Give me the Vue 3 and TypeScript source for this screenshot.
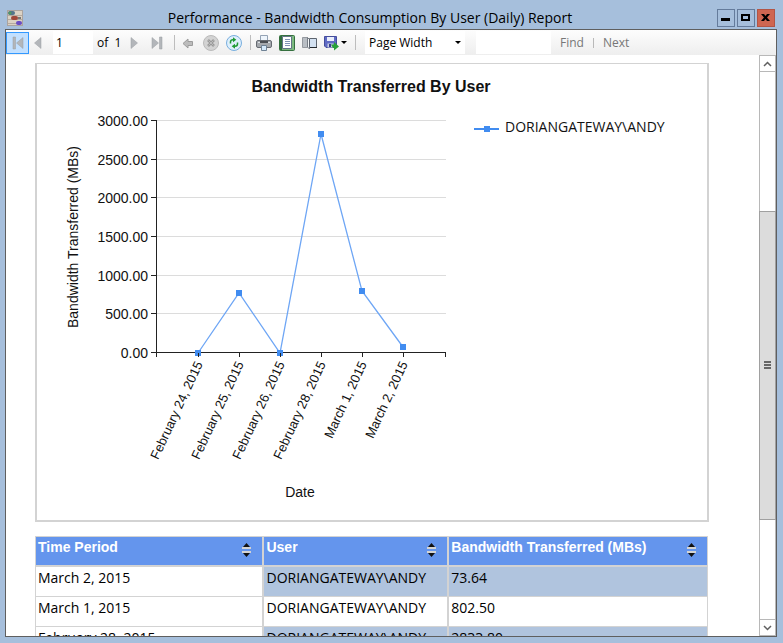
<script setup lang="ts">
import { computed, ref } from 'vue'

interface Sample {
  label: string
  value: number
}

interface Row {
  period: string
  user: string
  total: string
}

const samples: Sample[] = [
  { label: 'February 24, 2015', value: 6 },
  { label: 'February 25, 2015', value: 778 },
  { label: 'February 26, 2015', value: 2 },
  { label: 'February 28, 2015', value: 2833.8 },
  { label: 'March 1, 2015', value: 802.5 },
  { label: 'March 2, 2015', value: 73.64 },
]

const rows: Row[] = [
  { period: 'March 2, 2015', user: 'DORIANGATEWAY\\ANDY', total: '73.64' },
  { period: 'March 1, 2015', user: 'DORIANGATEWAY\\ANDY', total: '802.50' },
  { period: 'February 28, 2015', user: 'DORIANGATEWAY\\ANDY', total: '2833.80' },
]

const columns = ['Time Period', 'User', 'Bandwidth Transferred (MBs)']

const page = ref('1')
const zoom = ref('Page Width')
const search = ref('')

const plot = { left: 120, right: 409, top: 57, bottom: 289, max: 3000 }

const yOf = (v: number): number =>
  plot.bottom - Math.round((v / plot.max) * (plot.bottom - plot.top))
const xOf = (i: number): number => plot.left + 41 * (i + 1)

const yTicks = [3000, 2500, 2000, 1500, 1000, 500, 0]
const points = computed(() => samples.map((s, i) => ({ ...s, x: xOf(i), y: yOf(s.value) })))
const line = computed(() => points.value.map((p) => `${p.x},${p.y}`).join(' '))
</script>

<template>
  <div class="window">
    <header class="titlebar">
      <svg class="app-icon" width="16" height="16" viewBox="0 0 16 16" aria-hidden="true">
        <rect width="16" height="16" fill="#aaa39f" />
        <rect x="1" y="1" width="14" height="14" fill="#dcd2c4" />
        <path d="M1 5.500h14M1 9.500h14M1 13.500h14" stroke="#b5aaa0" />
        <rect x="1" y="1" width="7" height="4" rx="2" fill="#54758c" />
        <circle cx="3" cy="3" r="1.500" fill="#4f9a5c" />
        <rect x="4" y="6" width="7" height="4" rx="2" fill="#a1483a" />
        <path d="M11 8h3" stroke="#777" stroke-width="2" />
        <rect x="9" y="11" width="6" height="4" rx="2" fill="#6a4cc4" />
      </svg>
      <h1>Performance - Bandwidth Consumption By User (Daily) Report</h1>
      <div class="controls">
        <button type="button" aria-label="Minimize">
          <svg width="16" height="16" viewBox="0 0 16 16"><path d="M3 8h9v3H3z" /></svg>
        </button>
        <button type="button" aria-label="Maximize">
          <svg width="16" height="16" viewBox="0 0 16 16">
            <path fill-rule="evenodd" d="M3 4h9v7H3zM5 6v3h5V6z" />
          </svg>
        </button>
        <button type="button" class="close" aria-label="Close">
          <svg width="16" height="16" viewBox="0 0 16 16">
            <path d="M3 4h3l1.500 2L9 4h3L9 7.500 12 11H9L7.500 9 6 11H3l3-3.500z" />
          </svg>
        </button>
      </div>
    </header>

    <main class="frame">
      <div class="toolbar">
        <button type="button" class="tool active" aria-label="First page">
          <svg width="16" height="16" viewBox="0 0 16 16" class="nav">
            <path d="M3 2h2.500v12H3zM13 2.500v11L6.500 8z" />
          </svg>
        </button>
        <button type="button" class="tool narrow" aria-label="Previous page">
          <svg width="16" height="16" viewBox="0 0 16 16" class="nav"><path d="M11 2.500v11L4.500 8z" /></svg>
        </button>
        <input v-model="page" class="page" type="text" aria-label="Page" />
        <span class="of">of&nbsp; 1</span>
        <button type="button" class="tool narrow" aria-label="Next page">
          <svg width="16" height="16" viewBox="0 0 16 16" class="nav"><path d="M5 2.500v11L11.500 8z" /></svg>
        </button>
        <button type="button" class="tool last" aria-label="Last page">
          <svg width="16" height="16" viewBox="0 0 16 16" class="nav">
            <path d="M2 2.500v11L8.500 8zM9.500 2H12v12H9.500z" />
          </svg>
        </button>
        <span class="sep"></span>
        <button type="button" class="tool" aria-label="Back">
          <svg width="16" height="16" viewBox="0 0 16 16">
            <path d="M3 8.500L8 4v2.500h4.500v4H8V13z" fill="#bcbcbc" stroke="#9c9c9c" />
          </svg>
        </button>
        <button type="button" class="tool" aria-label="Stop">
          <svg width="16" height="16" viewBox="0 0 16 16">
            <circle cx="8" cy="8" r="7.500" fill="#d3d3d3" stroke="#bababa" />
            <path d="M5 5l6 6M11 5l-6 6" stroke="#999" stroke-width="2.600" />
            <path d="M5.500 5.500l5 5M10.500 5.500l-5 5" stroke="#c4c4c4" stroke-width=".8" />
          </svg>
        </button>
        <button type="button" class="tool" aria-label="Refresh">
          <svg width="16" height="16" viewBox="0 0 16 16">
            <circle cx="8" cy="8" r="7.500" fill="#deeffc" stroke="#78aede" />
            <path d="M4.500 8.500V7Q4.500 4.800 7 4.800M11.500 7.500V9Q11.500 11.200 9 11.200" fill="none" stroke="#1f9a35" stroke-width="1.500" />
            <path d="M7 2.300l3.300 2.500L7 7.300zM9 8.700l-3.300 2.500L9 13.700z" fill="#1f9a35" />
          </svg>
        </button>
        <span class="sep"></span>
        <button type="button" class="tool" aria-label="Print">
          <svg width="16" height="16" viewBox="0 0 16 16">
            <path d="M4.500.5h7v6h-7z" fill="#eef5fc" stroke="#94a3b5" />
            <rect x=".5" y="5.500" width="15" height="7" rx="1.500" fill="#a4a8ad" stroke="#666b72" />
            <path d="M2 7.500h12" stroke="#dfe3e8" />
            <path d="M4 6h8v2H4z" fill="#4a4e54" />
            <path d="M5.500 10.500h5v5h-5z" fill="#d4e9fb" stroke="#6f8295" />
          </svg>
        </button>
        <button type="button" class="tool" aria-label="Print layout">
          <svg width="16" height="16" viewBox="0 0 16 16">
            <rect x=".5" y=".5" width="15" height="15" rx="1" fill="#7dbb80" stroke="#35703f" />
            <path d="M1 1h2v14H1z" fill="#2f6d3c" />
            <path d="M3.500 1.500h9v12h-9z" fill="#fff" stroke="#637487" />
            <path d="M6 4.500h5M6 6.500h5M6 8.500h5M6 10.500h5" stroke="#7f93b5" />
          </svg>
        </button>
        <button type="button" class="tool" aria-label="Page setup">
          <svg width="16" height="16" viewBox="0 0 16 16">
            <path d="M.5 2.500h5v10h-5z" fill="#b9bec4" stroke="#95999f" />
            <path d="M5.500 2.500l2 2v9.500l-2-2z" fill="#f4f6f8" stroke="#777d85" />
            <path d="M7.500 3.500h7v9h-7z" fill="#d3e1f1" stroke="#5d646e" />
            <path d="M8 12.500h7" stroke="#24282d" />
          </svg>
        </button>
        <button type="button" class="tool export" aria-label="Export">
          <svg width="25" height="16" viewBox="0 0 25 16">
            <path d="M1.500 1.500h12v11H3l-1.500-1.500z" fill="#5f6ac4" stroke="#444d9c" />
            <path d="M4 2h7v4H4z" fill="#e9eefb" />
            <path d="M4.500 8.500h6v4h-6z" fill="#c9cfe0" />
            <path d="M6 9h2v3H6z" fill="#343c8c" />
            <path d="M8 9.500h3V7l5 4.500-5 4V13h-1z" fill="#27a03a" />
            <path d="M18 6h6l-3 3z" fill="#000" />
          </svg>
        </button>
        <span class="sep"></span>
        <div class="zoom">
          <select v-model="zoom" aria-label="Zoom">
            <option>Page Width</option>
            <option>Whole Page</option>
            <option>100%</option>
          </select>
          <svg width="6" height="3" viewBox="0 0 6 3" aria-hidden="true"><path d="M0 0h6L3 3z" /></svg>
        </div>
        <input v-model="search" class="search" type="text" aria-label="Search text" />
        <button type="button" class="link">Find</button>
        <span class="bar"></span>
        <button type="button" class="link">Next</button>
      </div>

      <div class="viewport">
        <section class="report">
          <figure class="chart">
            <svg viewBox="0 0 670 456" role="img" aria-label="Bandwidth Transferred By User">
              <text class="chart-title" x="334" y="28" text-anchor="middle">Bandwidth Transferred By User</text>
              <g v-for="t in yTicks" :key="t">
                <rect class="grid" :x="plot.left" :y="yOf(t) - 1" :width="plot.right - plot.left" height="1" />
                <rect class="axis" :x="plot.left - 6" :y="yOf(t) - 1" width="6" height="1" />
                <text x="111" :y="yOf(t) + 5" text-anchor="end">{{ t.toFixed(2) }}</text>
              </g>
              <text transform="translate(41 173) rotate(-90)" text-anchor="middle">
                Bandwidth Transferred (MBs)
              </text>
              <rect class="axis" :x="plot.left - 1" :y="plot.top - 1" width="1" height="237" />
              <rect class="axis" :x="plot.left" :y="plot.bottom - 1" :width="plot.right - plot.left" height="1" />
              <rect class="axis" :x="plot.right - 1" :y="plot.bottom" width="1" height="4" />
              <polyline class="series" :points="line" />
              <g v-for="p in points" :key="p.label">
                <rect class="marker" :x="p.x - 3" :y="p.y - 3" width="6" height="6" />
                <rect class="axis" :x="p.x" :y="plot.bottom" width="1" height="4" />
                <text
                  class="date"
                  :transform="`translate(${p.x + 5} 300) rotate(-65)`"
                  text-anchor="end"
                >{{ p.label }}</text>
              </g>
              <text x="263" y="433" text-anchor="middle">Date</text>
              <rect class="marker" x="437" y="64" width="25" height="2" />
              <rect class="marker" x="447" y="62" width="6" height="6" />
              <text class="legend" x="468" y="68">DORIANGATEWAY\ANDY</text>
            </svg>
          </figure>

          <table>
            <colgroup>
              <col class="col-period" />
              <col class="col-user" />
              <col />
            </colgroup>
            <thead>
              <tr>
                <th v-for="c in columns" :key="c" scope="col">
                  <div class="head">
                    <span>{{ c }}</span>
                    <button type="button" class="sort" :aria-label="`Sort by ${c}`">
                      <svg width="9" height="14" viewBox="0 0 9 14">
                        <path d="M0 5h9M0 9h9" stroke="#d3d3d3" stroke-width="2" />
                        <path d="M4.500 0L8 4H1zM1 10h7l-3.500 4z" fill="#111" />
                      </svg>
                    </button>
                  </div>
                </th>
              </tr>
            </thead>
            <tbody>
              <tr v-for="r in rows" :key="r.period">
                <td>{{ r.period }}</td>
                <td>{{ r.user }}</td>
                <td>{{ r.total }}</td>
              </tr>
            </tbody>
          </table>
        </section>

        <div class="scrollbar">
          <button type="button" aria-label="Scroll up">
            <svg width="9" height="6" viewBox="0 0 9 6"><path d="M1 5l3.500-3.500L8 5" /></svg>
          </button>
          <div class="track">
            <div class="before"></div>
            <div class="thumb"><i></i><i></i><i></i></div>
            <div class="after"></div>
          </div>
          <button type="button" aria-label="Scroll down">
            <svg width="9" height="6" viewBox="0 0 9 6"><path d="M1 1l3.500 3.500L8 1" /></svg>
          </button>
        </div>
      </div>
    </main>
  </div>
</template>

<style>
body {
  margin: 0;
  overflow: hidden;
}
</style>

<style scoped>
.window {
  display: flex;
  flex-direction: column;
  box-sizing: border-box;
  height: 100vh;
  padding: 0 6px 6px 5px;
  background: #a6bfdc;
  color: #000;
  font-family: "Open Sans", "Noto Sans", sans-serif;
  font-size: 12px;
}

button,
input,
select {
  box-sizing: border-box;
  margin: 0;
  padding: 0;
  border: 0;
  border-radius: 0;
  outline: 0;
  background: none;
  color: inherit;
  font: inherit;
}

svg {
  display: block;
}

.titlebar {
  display: flex;
  flex: none;
  align-items: center;
  box-sizing: border-box;
  height: 29px;
  padding: 6px 2px 0;
}

h1 {
  flex: 1;
  margin: 0;
  font-size: 14px;
  font-weight: 400;
  line-height: 20px;
  text-align: center;
  white-space: nowrap;
}

.controls {
  display: flex;
  gap: 2px;
}

.controls button {
  width: 18px;
  height: 18px;
  border: 1px solid #647b9b;
}

.controls .close {
  border-color: #b25546;
  background: #cf6651;
}

.frame {
  display: flex;
  flex: 1;
  flex-direction: column;
  min-height: 0;
  border: 1px solid #5f5f5f;
  background: #fff;
}

.toolbar {
  display: flex;
  flex: none;
  align-items: center;
  height: 25px;
  background: linear-gradient(#fdfdfd, #eee);
}

.tool {
  display: flex;
  flex: none;
  align-items: center;
  justify-content: center;
  width: 23px;
  height: 23px;
}

.tool.active {
  height: 22px;
  border: 1px solid #3399ff;
  background: #c2e0ff;
}

.tool.narrow {
  width: 18px;
}

.tool.last {
  margin-left: 3px;
}

.tool.export {
  width: 29px;
}

.nav path {
  fill: #b3b6ba;
  stroke: #9b9ea3;
  stroke-width: 0.5;
}

.page {
  width: 40px;
  height: 23px;
  margin-left: 6px;
  padding-left: 3px;
  background: #fff;
}

.of {
  width: 28px;
  margin-left: 4px;
  white-space: nowrap;
}

.sep {
  flex: none;
  width: 1px;
  height: 15px;
  margin: 0 1px 0 5px;
  background: #bdbdbd;
}

.zoom {
  position: relative;
  width: 100px;
  margin-left: 8px;
}

.zoom select {
  width: 100%;
  height: 23px;
  padding-left: 4px;
  appearance: none;
  background: #fff;
}

.zoom svg {
  position: absolute;
  top: 10px;
  right: 4px;
  pointer-events: none;
}

.search {
  width: 75px;
  height: 23px;
  margin-left: 11px;
  background: #fff;
}

.link {
  margin-left: 9px;
  color: #777;
}

.bar {
  width: 1px;
  height: 10px;
  margin-left: 9px;
  background: #b9b9b9;
}

.viewport {
  display: flex;
  flex: 1;
  min-height: 0;
}

.report {
  flex: 1;
  min-width: 0;
  padding: 8px 50px 0 29px;
  overflow: hidden;
}

.chart {
  margin: 0 0 14px;
  border: 2px solid #d3d3d3;
  border-top-width: 1px;
}

.chart svg {
  width: 100%;
  height: auto;
}

.chart text {
  fill: #111;
  font-family: "Liberation Sans", Arial, sans-serif;
  font-size: 14px;
}

.chart .date {
  font-size: 13px;
}

.chart .chart-title {
  font-size: 16px;
  font-weight: 700;
}

.chart .legend {
  font-family: "Open Sans", "Noto Sans", sans-serif;
}

.grid {
  fill: #dcdcdc;
}

.axis {
  fill: #222;
}

.series {
  fill: none;
  stroke: #6ea6f5;
  stroke-width: 1.3;
}

.marker {
  fill: #418cf0;
}

table {
  width: calc(100% - 1px);
  border: 1px solid #d3d3d3;
  border-width: 1px 0 0 1px;
  border-spacing: 0;
  table-layout: fixed;
}

.col-period {
  width: 34%;
}

.col-user {
  width: 27.5%;
}

th,
td {
  box-sizing: border-box;
  height: 30px;
  padding: 0 2px;
  border-right: 2px solid #d3d3d3;
  border-bottom: 1px solid #d3d3d3;
  font-size: 14px;
  line-height: 22px;
  text-align: left;
  vertical-align: top;
  white-space: nowrap;
}

th {
  border-bottom-width: 2px;
  background: #6495ed;
  color: #fff;
  font-family: "Liberation Sans", Arial, sans-serif;
  line-height: 20px;
}

th:last-child,
td:last-child {
  border-right-width: 1px;
}

tr:nth-child(odd) td:not(:first-child) {
  background: #b0c4de;
}

.head {
  display: flex;
  align-items: flex-start;
  justify-content: space-between;
}

.sort {
  margin: 6px 9px 0 0;
}

.scrollbar {
  display: flex;
  flex: none;
  flex-direction: column;
  width: 17px;
}

.scrollbar button {
  display: flex;
  align-items: center;
  justify-content: center;
  height: 17px;
  border: 1px solid #b8b8b8;
  background: #fff;
}

.scrollbar path {
  fill: none;
  stroke: #606060;
  stroke-width: 1.5;
}

.track {
  display: flex;
  flex: 1;
  flex-direction: column;
  border: 1px solid #b8b8b8;
  border-width: 0 1px;
}

.before {
  flex: 140;
}

.thumb {
  display: flex;
  flex: 308;
  flex-direction: column;
  align-items: center;
  justify-content: center;
  gap: 1px;
  box-sizing: border-box;
  margin: 0 -1px;
  border: 1px solid #a0a0a0;
  background: #dcdcdc;
}

.thumb i {
  width: 7px;
  height: 2px;
  background: #666;
}

.after {
  flex: 100;
}
</style>
